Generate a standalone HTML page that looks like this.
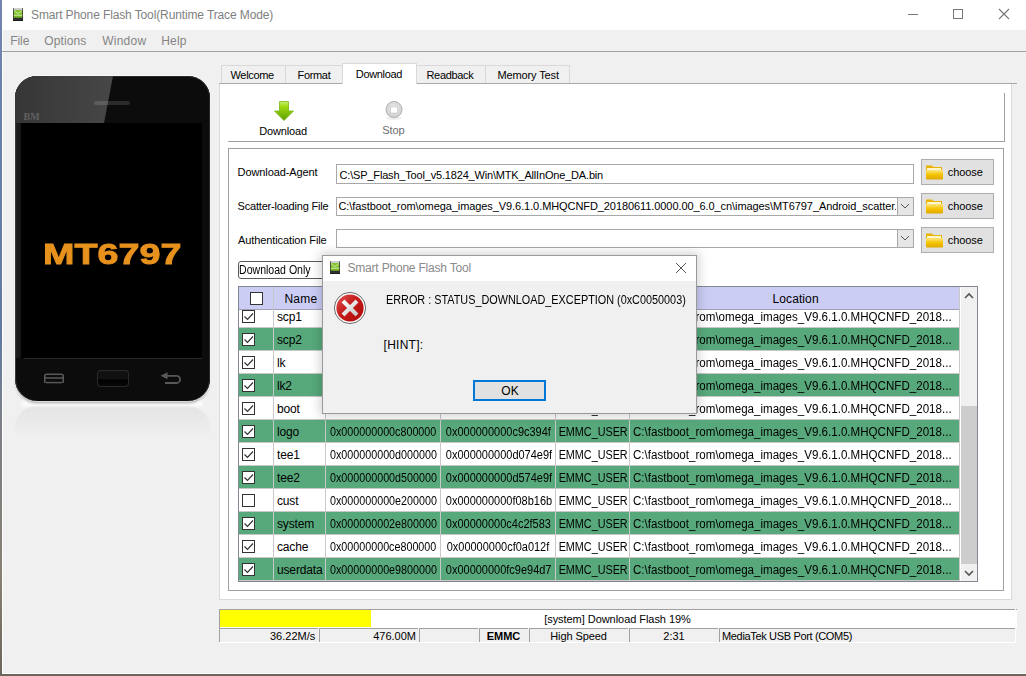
<!DOCTYPE html>
<html><head><meta charset="utf-8"><style>
html,body{margin:0;padding:0;width:1026px;height:676px;overflow:hidden;font-family:'Liberation Sans', sans-serif}
</style></head><body>
<div style="position:absolute;left:0px;top:0px;width:1026px;height:676px;background:linear-gradient(#7484b0,#6680aa 20%,#5f7aa0 50%,#7d8088 62%,#878173 85%,#6b655a)"></div>
<div style="position:absolute;left:2px;top:0px;width:1024px;height:674px;background:#f0f0f0"></div>
<div style="position:absolute;left:2px;top:0px;width:1px;height:674px;background:#fff"></div>
<div style="position:absolute;left:2px;top:673px;width:1024px;height:1px;background:#fff"></div>
<div style="position:absolute;left:3px;top:0px;width:1023px;height:30px;background:#fff"></div>
<svg style="position:absolute;left:13px;top:8px" width="10" height="13"><rect x="0" y="0" width="10" height="13" rx="1" fill="#303030"/><rect x="0.8" y="0" width="8.4" height="2" fill="#cfcfcf"/><rect x="0.8" y="2" width="8.4" height="7.5" fill="#86c232"/><path d="M0.8 2.6L5 5.6L9.2 2.6" stroke="#cdeaa0" stroke-width="0.9" fill="none"/><rect x="0.8" y="6.8" width="8.4" height="1" fill="#c8e89a"/><rect x="0.8" y="8.6" width="8.4" height="1" fill="#6aa522"/><rect x="0" y="12" width="10" height="1" fill="#1c1c1c"/></svg>
<div style="position:absolute;left:31px;top:9.00px;font:normal 12px/12px 'Liberation Sans', sans-serif;color:#7f7f7f;letter-spacing:-0.12px;white-space:pre;">Smart Phone Flash Tool(Runtime Trace Mode)</div>
<div style="position:absolute;left:908px;top:14px;width:10px;height:1px;background:#777"></div>
<div style="position:absolute;left:953px;top:9px;width:8px;height:8px;border:1px solid #777"></div>
<svg style="position:absolute;left:998px;top:8px" width="12" height="12"><path d="M1 1L11 11M11 1L1 11" stroke="#777" stroke-width="1.1"/></svg>
<div style="position:absolute;left:2px;top:51px;width:1024px;height:1px;background:#a0a0a0"></div>
<div style="position:absolute;left:10.3px;top:35.00px;font:normal 12px/12px 'Liberation Sans', sans-serif;color:#858585;letter-spacing:-0.1px;white-space:pre;">File</div>
<div style="position:absolute;left:44.3px;top:35.00px;font:normal 12px/12px 'Liberation Sans', sans-serif;color:#858585;letter-spacing:0.12px;white-space:pre;">Options</div>
<div style="position:absolute;left:102.2px;top:35.00px;font:normal 12px/12px 'Liberation Sans', sans-serif;color:#858585;letter-spacing:0.25px;white-space:pre;">Window</div>
<div style="position:absolute;left:161.2px;top:35.00px;font:normal 12px/12px 'Liberation Sans', sans-serif;color:#858585;letter-spacing:0.2px;white-space:pre;">Help</div>
<div style="position:absolute;left:15px;top:406px;width:195px;height:27px;border-radius:22px 22px 0 0;background:linear-gradient(#e4e4e4,#e9e9e9 50%,#eeeeee)"></div>
<div style="position:absolute;left:22px;top:400px;width:181px;height:6px;background:#fcfcfc;filter:blur(1.5px)"></div>
<div style="position:absolute;left:15px;top:76px;width:195px;height:325px;border-radius:22px;background:#0c0c0c;box-shadow:inset 1px 0 0 #3a3a3a, inset -1px 0 0 #262626, inset 0 1px 0 #2a2a2a, 0 0 0 1px rgba(255,255,255,.5), 0 3px 3px -1px rgba(0,0,0,.35);overflow:hidden">
<div style="position:absolute;left:0;top:0;width:195px;height:47px;background:linear-gradient(90deg,#363636,#4a4a4a 60%,#555);clip-path:polygon(0 0,98px 0,89px 47px,0 47px)"></div>
<div style="position:absolute;left:79px;top:25px;width:36px;height:4px;border-radius:2px;background:rgba(255,255,255,.13)"></div>
<div style="position:absolute;left:1px;top:47px;width:5px;height:235px;background:linear-gradient(90deg,#202020,#141414)"></div><div style="position:absolute;left:6px;top:47px;width:181px;height:235px;background:#000"></div>
<div style="position:absolute;left:9px;top:282px;width:178px;height:1px;background:#262626"></div>
<div style="position:absolute;left:82px;top:294px;width:32px;height:17px;border-radius:4px;background:linear-gradient(#121212,#101010 50%,#000 60%,#0a0a0a);box-shadow:inset 0 0 0 1px #2a2a2a"></div>
</div>
<div style="position:absolute;left:23.5px;top:112.00px;font:bold 10px/10px 'Liberation Serif', serif;color:#606060;letter-spacing:0px;white-space:pre;">BM</div>
<div style="position:absolute;left:42.5px;top:239.00px;font:bold 30px/30px 'Liberation Sans', sans-serif;color:#e8921e;letter-spacing:0px;white-space:pre;transform:scaleX(1.258);transform-origin:0 0;-webkit-text-stroke:0.9px #e8921e">MT6797</div>
<svg style="position:absolute;left:40px;top:370px" width="160" height="18"><path d="M4.8 13V6.2a2 2 0 0 1 2-2h14.4a2 2 0 0 1 2 2V13" fill="none" stroke="#585858" stroke-width="1.6"/><line x1="5" y1="8" x2="23" y2="8" stroke="#585858" stroke-width="1.5"/><line x1="6" y1="12.6" x2="22" y2="12.6" stroke="#585858" stroke-width="1.5"/><path d="M120.5 5.8 L127.5 2.3 L127.5 9.3 Z" fill="#585858"/><path d="M126 5.8 H136.5 a3.6 3.6 0 0 1 0 7.2 H125" fill="none" stroke="#585858" stroke-width="1.8"/></svg>
<div style="position:absolute;left:219px;top:83px;width:793px;height:517px;background:#fff;border:1px solid #d9d9d9;border-top-color:#a8a8a8;box-sizing:border-box"></div>
<div style="position:absolute;left:221px;top:65px;width:65px;height:19px;background:#f0f0f0;border:1px solid #d9d9d9;border-bottom:none;box-sizing:border-box"></div>
<div style="position:absolute;left:285px;top:65px;width:58px;height:19px;background:#f0f0f0;border:1px solid #d9d9d9;border-bottom:none;box-sizing:border-box"></div>
<div style="position:absolute;left:416px;top:65px;width:70px;height:19px;background:#f0f0f0;border:1px solid #d9d9d9;border-bottom:none;box-sizing:border-box"></div>
<div style="position:absolute;left:485px;top:65px;width:85px;height:19px;background:#f0f0f0;border:1px solid #d9d9d9;border-bottom:none;box-sizing:border-box"></div>
<div style="position:absolute;left:219px;top:83px;width:798px;height:1px;background:#a8a8a8"></div>
<div style="position:absolute;left:342px;top:63px;width:75px;height:21px;background:#fff;border:1px solid #d9d9d9;border-bottom:none;box-sizing:border-box"></div>
<div style="position:absolute;left:230.5px;top:70.00px;font:normal 11px/11px 'Liberation Sans', sans-serif;color:#000;letter-spacing:-0.33px;white-space:pre;">Welcome</div>
<div style="position:absolute;left:297.5px;top:70.00px;font:normal 11px/11px 'Liberation Sans', sans-serif;color:#000;letter-spacing:-0.33px;white-space:pre;">Format</div>
<div style="position:absolute;left:355.8px;top:69.00px;font:normal 11px/11px 'Liberation Sans', sans-serif;color:#000;letter-spacing:-0.33px;white-space:pre;">Download</div>
<div style="position:absolute;left:426.5px;top:70.00px;font:normal 11px/11px 'Liberation Sans', sans-serif;color:#000;letter-spacing:-0.33px;white-space:pre;">Readback</div>
<div style="position:absolute;left:497.5px;top:70.00px;font:normal 11px/11px 'Liberation Sans', sans-serif;color:#000;letter-spacing:-0.13px;white-space:pre;">Memory Test</div>
<div style="position:absolute;left:228px;top:141px;width:777px;height:1px;background:#a0a0a0"></div>
<div style="position:absolute;left:1004px;top:93px;width:1px;height:49px;background:#a0a0a0"></div>
<svg style="position:absolute;left:273px;top:100px" width="22" height="22"><defs><linearGradient id="ga" x1="0" y1="0" x2="0" y2="1"><stop offset="0" stop-color="#c8f07a"/><stop offset=".25" stop-color="#a3dc14"/><stop offset=".6" stop-color="#80bf0a"/><stop offset="1" stop-color="#5f9e05"/></linearGradient></defs><path d="M6.5 1.5H15.5V11H20.5L11 20.5L1.5 11H6.5Z" fill="url(#ga)" stroke="#7cb70a" stroke-width=".8"/></svg>
<div style="position:absolute;left:259.2px;top:126.00px;font:normal 11px/11px 'Liberation Sans', sans-serif;color:#000;letter-spacing:-0.15px;white-space:pre;">Download</div>
<svg style="position:absolute;left:384px;top:99px" width="22" height="22"><defs><radialGradient id="gs" cx=".5" cy=".4" r=".6"><stop offset="0" stop-color="#e8e8e8"/><stop offset="1" stop-color="#cfcfcf"/></radialGradient></defs><ellipse cx="10" cy="19.3" rx="8" ry="1.6" fill="rgba(0,0,0,.07)"/><circle cx="10" cy="10.5" r="8" fill="url(#gs)" stroke="#b0b0b0" stroke-width="1"/><rect x="6.5" y="8" width="7" height="6" fill="#fff" stroke="#bbb" stroke-width=".5"/></svg>
<div style="position:absolute;left:382.3px;top:125.00px;font:normal 11px/11px 'Liberation Sans', sans-serif;color:#6d6d6d;letter-spacing:-0.1px;white-space:pre;">Stop</div>
<div style="position:absolute;left:228px;top:148px;width:776px;height:443px;border:1px solid #a0a0a0;box-sizing:border-box"></div>
<div style="position:absolute;left:237.6px;top:167.00px;font:normal 11px/11px 'Liberation Sans', sans-serif;color:#000;letter-spacing:-0.1px;white-space:pre;">Download-Agent</div>
<div style="position:absolute;left:237.6px;top:201.00px;font:normal 11px/11px 'Liberation Sans', sans-serif;color:#000;letter-spacing:-0.2px;white-space:pre;">Scatter-loading File</div>
<div style="position:absolute;left:238px;top:235.00px;font:normal 11px/11px 'Liberation Sans', sans-serif;color:#000;letter-spacing:-0.1px;white-space:pre;">Authentication File</div>
<div style="position:absolute;left:336px;top:164px;width:578px;height:20px;background:#fff;border:1px solid #a8a8a8;box-sizing:border-box"></div>
<div style="position:absolute;left:339.6px;top:170.00px;font:normal 11px/11px 'Liberation Sans', sans-serif;color:#000;letter-spacing:-0.18px;white-space:pre;">C:\SP_Flash_Tool_v5.1824_Win\MTK_AllInOne_DA.bin</div>
<div style="position:absolute;left:336px;top:197px;width:578px;height:19px;background:#fff;border:1px solid #a8a8a8;box-sizing:border-box;overflow:hidden"></div>
<div style="position:absolute;left:337px;top:198px;width:559px;height:17px;overflow:hidden">
<div style="position:absolute;left:1.5px;top:3.00px;font:normal 11px/11px 'Liberation Sans', sans-serif;color:#000;letter-spacing:-0.08px;white-space:pre;">C:\fastboot_rom\omega_images_V9.6.1.0.MHQCNFD_20180611.0000.00_6.0_cn\images\MT6797_Android_scatter.</div>
</div>
<div style="position:absolute;left:336px;top:229px;width:578px;height:19px;background:#fff;border:1px solid #a8a8a8;box-sizing:border-box"></div>
<div style="position:absolute;left:897px;top:197px;width:17px;height:19px;background:#e6e6e6;border:1px solid #a8a8a8;box-sizing:border-box"></div>
<svg style="position:absolute;left:899px;top:202px" width="12" height="8"><path d="M2 2L6 6L10 2" fill="none" stroke="#555" stroke-width="1"/></svg>
<div style="position:absolute;left:897px;top:229px;width:17px;height:19px;background:#e6e6e6;border:1px solid #a8a8a8;box-sizing:border-box"></div>
<svg style="position:absolute;left:899px;top:234px" width="12" height="8"><path d="M2 2L6 6L10 2" fill="none" stroke="#555" stroke-width="1"/></svg>
<div style="position:absolute;left:921px;top:159px;width:73px;height:26px;background:#e1e1e1;border:1px solid #adadad;box-sizing:border-box"></div>
<svg style="position:absolute;left:925px;top:164px" width="19" height="16"><defs><linearGradient id="gf159" x1="0" y1="0" x2="0" y2="1"><stop offset="0" stop-color="#ffe680"/><stop offset=".5" stop-color="#f5c400"/><stop offset="1" stop-color="#e0a800"/></linearGradient></defs><path d="M1 1.5h6l1.5 1.5H17v12H1z" fill="#e8b400"/><rect x="2" y="4" width="14" height="3" fill="#fff6d0"/><rect x="1" y="6" width="17" height="9.5" rx="1" fill="url(#gf159)"/></svg>
<div style="position:absolute;left:947.8px;top:167.00px;font:normal 11px/11px 'Liberation Sans', sans-serif;color:#000;letter-spacing:-0.1px;white-space:pre;">choose</div>
<div style="position:absolute;left:921px;top:193px;width:73px;height:26px;background:#e1e1e1;border:1px solid #adadad;box-sizing:border-box"></div>
<svg style="position:absolute;left:925px;top:198px" width="19" height="16"><defs><linearGradient id="gf193" x1="0" y1="0" x2="0" y2="1"><stop offset="0" stop-color="#ffe680"/><stop offset=".5" stop-color="#f5c400"/><stop offset="1" stop-color="#e0a800"/></linearGradient></defs><path d="M1 1.5h6l1.5 1.5H17v12H1z" fill="#e8b400"/><rect x="2" y="4" width="14" height="3" fill="#fff6d0"/><rect x="1" y="6" width="17" height="9.5" rx="1" fill="url(#gf193)"/></svg>
<div style="position:absolute;left:947.8px;top:201.00px;font:normal 11px/11px 'Liberation Sans', sans-serif;color:#000;letter-spacing:-0.1px;white-space:pre;">choose</div>
<div style="position:absolute;left:921px;top:227px;width:73px;height:26px;background:#e1e1e1;border:1px solid #adadad;box-sizing:border-box"></div>
<svg style="position:absolute;left:925px;top:232px" width="19" height="16"><defs><linearGradient id="gf227" x1="0" y1="0" x2="0" y2="1"><stop offset="0" stop-color="#ffe680"/><stop offset=".5" stop-color="#f5c400"/><stop offset="1" stop-color="#e0a800"/></linearGradient></defs><path d="M1 1.5h6l1.5 1.5H17v12H1z" fill="#e8b400"/><rect x="2" y="4" width="14" height="3" fill="#fff6d0"/><rect x="1" y="6" width="17" height="9.5" rx="1" fill="url(#gf227)"/></svg>
<div style="position:absolute;left:947.8px;top:235.00px;font:normal 11px/11px 'Liberation Sans', sans-serif;color:#000;letter-spacing:-0.1px;white-space:pre;">choose</div>
<div style="position:absolute;left:238px;top:261px;width:100px;height:18px;background:#fff;border:1px solid #5a5a5a;border-radius:3px;box-sizing:border-box"></div>
<div style="position:absolute;left:239px;top:264.00px;font:normal 12px/12px 'Liberation Sans', sans-serif;color:#000;letter-spacing:0px;white-space:pre;transform:scaleX(0.88);transform-origin:0 0">Download Only</div>
<div style="position:absolute;left:238px;top:286px;width:740px;height:296px;background:#fff;border:1px solid #828790;box-sizing:border-box"></div>
<div style="position:absolute;left:239px;top:287px;width:721px;height:22px;background:#cccdf5"></div>
<div style="position:absolute;left:239px;top:309px;width:721px;height:1px;background:#a0a0b8"></div>
<div style="position:absolute;left:273px;top:287px;width:1px;height:294px;background:#c8c8c8"></div>
<div style="position:absolute;left:325px;top:287px;width:1px;height:294px;background:#c8c8c8"></div>
<div style="position:absolute;left:440px;top:287px;width:1px;height:294px;background:#c8c8c8"></div>
<div style="position:absolute;left:555px;top:287px;width:1px;height:294px;background:#c8c8c8"></div>
<div style="position:absolute;left:629px;top:287px;width:1px;height:294px;background:#c8c8c8"></div>
<div style="position:absolute;left:959px;top:287px;width:1px;height:294px;background:#c8c8c8"></div>
<div style="position:absolute;left:250px;top:292px;width:13px;height:13px;background:#fff;border:1px solid #333;box-sizing:border-box"></div>
<div style="position:absolute;left:284.5px;top:293.00px;font:normal 12px/12px 'Liberation Sans', sans-serif;color:#000;letter-spacing:0.2px;white-space:pre;">Name</div>
<div style="position:absolute;left:772.5px;top:293.00px;font:normal 12px/12px 'Liberation Sans', sans-serif;color:#000;letter-spacing:0.1px;white-space:pre;">Location</div>
<div style="position:absolute;left:239px;top:310px;width:720px;height:271px;overflow:hidden">
<div style="position:absolute;left:0px;top:0px;width:34px;height:17px;background:#fff"></div>
<div style="position:absolute;left:35px;top:0px;width:51px;height:17px;background:#fff"></div>
<div style="position:absolute;left:87px;top:0px;width:114px;height:17px;background:#fff"></div>
<div style="position:absolute;left:202px;top:0px;width:114px;height:17px;background:#fff"></div>
<div style="position:absolute;left:317px;top:0px;width:73px;height:17px;background:#fff"></div>
<div style="position:absolute;left:391px;top:0px;width:329px;height:17px;background:#fff"></div>
<div style="position:absolute;left:0;top:17px;width:720px;height:1px;background:#c8c8c8"></div>
<div style="position:absolute;left:3px;top:0px;width:13px;height:13px;background:#fff;border:1px solid #333;box-sizing:border-box"></div>
<svg style="position:absolute;left:3px;top:0px" width="13" height="13"><path d="M2.5 6.5L5.5 9.5L11 3.5" fill="none" stroke="#333" stroke-width="1.2"/></svg>
<div style="position:absolute;left:38px;top:1px;font:12px/12px 'Liberation Sans', sans-serif;white-space:pre;letter-spacing:-0.15px">scp1</div>
<div style="position:absolute;left:85px;width:114px;text-align:center;top:1px;font:12px/12px 'Liberation Sans', sans-serif;white-space:pre;transform:scaleX(0.895)">0x0000000000000000</div>
<div style="position:absolute;left:202px;width:114px;text-align:center;top:1px;font:12px/12px 'Liberation Sans', sans-serif;white-space:pre;transform:scaleX(0.915)">0x0000000000000000</div>
<div style="position:absolute;left:315.5px;width:73px;text-align:center;top:1px;font:12px/12px 'Liberation Sans', sans-serif;white-space:pre;transform:scaleX(0.9)">EMMC_USER</div>
<div style="position:absolute;left:394px;top:1px;font:12px/12px 'Liberation Sans', sans-serif;white-space:pre;transform:scaleX(0.965);transform-origin:0 0">C:\fastboot_rom\omega_images_V9.6.1.0.MHQCNFD_2018...</div>
<div style="position:absolute;left:0px;top:18px;width:34px;height:22px;background:#57a97c"></div>
<div style="position:absolute;left:35px;top:18px;width:51px;height:22px;background:#57a97c"></div>
<div style="position:absolute;left:87px;top:18px;width:114px;height:22px;background:#57a97c"></div>
<div style="position:absolute;left:202px;top:18px;width:114px;height:22px;background:#57a97c"></div>
<div style="position:absolute;left:317px;top:18px;width:73px;height:22px;background:#57a97c"></div>
<div style="position:absolute;left:391px;top:18px;width:329px;height:22px;background:#57a97c"></div>
<div style="position:absolute;left:0;top:40px;width:720px;height:1px;background:#c8c8c8"></div>
<div style="position:absolute;left:3px;top:23px;width:13px;height:13px;background:#fff;border:1px solid #333;box-sizing:border-box"></div>
<svg style="position:absolute;left:3px;top:23px" width="13" height="13"><path d="M2.5 6.5L5.5 9.5L11 3.5" fill="none" stroke="#333" stroke-width="1.2"/></svg>
<div style="position:absolute;left:38px;top:24px;font:12px/12px 'Liberation Sans', sans-serif;white-space:pre;letter-spacing:-0.15px">scp2</div>
<div style="position:absolute;left:85px;width:114px;text-align:center;top:24px;font:12px/12px 'Liberation Sans', sans-serif;white-space:pre;transform:scaleX(0.895)"></div>
<div style="position:absolute;left:202px;width:114px;text-align:center;top:24px;font:12px/12px 'Liberation Sans', sans-serif;white-space:pre;transform:scaleX(0.915)"></div>
<div style="position:absolute;left:315.5px;width:73px;text-align:center;top:24px;font:12px/12px 'Liberation Sans', sans-serif;white-space:pre;transform:scaleX(0.9)">EMMC_USER</div>
<div style="position:absolute;left:394px;top:24px;font:12px/12px 'Liberation Sans', sans-serif;white-space:pre;transform:scaleX(0.965);transform-origin:0 0">C:\fastboot_rom\omega_images_V9.6.1.0.MHQCNFD_2018...</div>
<div style="position:absolute;left:0px;top:41px;width:34px;height:22px;background:#fff"></div>
<div style="position:absolute;left:35px;top:41px;width:51px;height:22px;background:#fff"></div>
<div style="position:absolute;left:87px;top:41px;width:114px;height:22px;background:#fff"></div>
<div style="position:absolute;left:202px;top:41px;width:114px;height:22px;background:#fff"></div>
<div style="position:absolute;left:317px;top:41px;width:73px;height:22px;background:#fff"></div>
<div style="position:absolute;left:391px;top:41px;width:329px;height:22px;background:#fff"></div>
<div style="position:absolute;left:0;top:63px;width:720px;height:1px;background:#c8c8c8"></div>
<div style="position:absolute;left:3px;top:46px;width:13px;height:13px;background:#fff;border:1px solid #333;box-sizing:border-box"></div>
<svg style="position:absolute;left:3px;top:46px" width="13" height="13"><path d="M2.5 6.5L5.5 9.5L11 3.5" fill="none" stroke="#333" stroke-width="1.2"/></svg>
<div style="position:absolute;left:38px;top:47px;font:12px/12px 'Liberation Sans', sans-serif;white-space:pre;letter-spacing:-0.15px">lk</div>
<div style="position:absolute;left:85px;width:114px;text-align:center;top:47px;font:12px/12px 'Liberation Sans', sans-serif;white-space:pre;transform:scaleX(0.895)"></div>
<div style="position:absolute;left:202px;width:114px;text-align:center;top:47px;font:12px/12px 'Liberation Sans', sans-serif;white-space:pre;transform:scaleX(0.915)"></div>
<div style="position:absolute;left:315.5px;width:73px;text-align:center;top:47px;font:12px/12px 'Liberation Sans', sans-serif;white-space:pre;transform:scaleX(0.9)">EMMC_USER</div>
<div style="position:absolute;left:394px;top:47px;font:12px/12px 'Liberation Sans', sans-serif;white-space:pre;transform:scaleX(0.965);transform-origin:0 0">C:\fastboot_rom\omega_images_V9.6.1.0.MHQCNFD_2018...</div>
<div style="position:absolute;left:0px;top:64px;width:34px;height:22px;background:#57a97c"></div>
<div style="position:absolute;left:35px;top:64px;width:51px;height:22px;background:#57a97c"></div>
<div style="position:absolute;left:87px;top:64px;width:114px;height:22px;background:#57a97c"></div>
<div style="position:absolute;left:202px;top:64px;width:114px;height:22px;background:#57a97c"></div>
<div style="position:absolute;left:317px;top:64px;width:73px;height:22px;background:#57a97c"></div>
<div style="position:absolute;left:391px;top:64px;width:329px;height:22px;background:#57a97c"></div>
<div style="position:absolute;left:0;top:86px;width:720px;height:1px;background:#c8c8c8"></div>
<div style="position:absolute;left:3px;top:69px;width:13px;height:13px;background:#fff;border:1px solid #333;box-sizing:border-box"></div>
<svg style="position:absolute;left:3px;top:69px" width="13" height="13"><path d="M2.5 6.5L5.5 9.5L11 3.5" fill="none" stroke="#333" stroke-width="1.2"/></svg>
<div style="position:absolute;left:38px;top:70px;font:12px/12px 'Liberation Sans', sans-serif;white-space:pre;letter-spacing:-0.15px">lk2</div>
<div style="position:absolute;left:85px;width:114px;text-align:center;top:70px;font:12px/12px 'Liberation Sans', sans-serif;white-space:pre;transform:scaleX(0.895)"></div>
<div style="position:absolute;left:202px;width:114px;text-align:center;top:70px;font:12px/12px 'Liberation Sans', sans-serif;white-space:pre;transform:scaleX(0.915)"></div>
<div style="position:absolute;left:315.5px;width:73px;text-align:center;top:70px;font:12px/12px 'Liberation Sans', sans-serif;white-space:pre;transform:scaleX(0.9)">EMMC_USER</div>
<div style="position:absolute;left:394px;top:70px;font:12px/12px 'Liberation Sans', sans-serif;white-space:pre;transform:scaleX(0.965);transform-origin:0 0">C:\fastboot_rom\omega_images_V9.6.1.0.MHQCNFD_2018...</div>
<div style="position:absolute;left:0px;top:87px;width:34px;height:22px;background:#fff"></div>
<div style="position:absolute;left:35px;top:87px;width:51px;height:22px;background:#fff"></div>
<div style="position:absolute;left:87px;top:87px;width:114px;height:22px;background:#fff"></div>
<div style="position:absolute;left:202px;top:87px;width:114px;height:22px;background:#fff"></div>
<div style="position:absolute;left:317px;top:87px;width:73px;height:22px;background:#fff"></div>
<div style="position:absolute;left:391px;top:87px;width:329px;height:22px;background:#fff"></div>
<div style="position:absolute;left:0;top:109px;width:720px;height:1px;background:#c8c8c8"></div>
<div style="position:absolute;left:3px;top:92px;width:13px;height:13px;background:#fff;border:1px solid #333;box-sizing:border-box"></div>
<svg style="position:absolute;left:3px;top:92px" width="13" height="13"><path d="M2.5 6.5L5.5 9.5L11 3.5" fill="none" stroke="#333" stroke-width="1.2"/></svg>
<div style="position:absolute;left:38px;top:93px;font:12px/12px 'Liberation Sans', sans-serif;white-space:pre;letter-spacing:-0.15px">boot</div>
<div style="position:absolute;left:85px;width:114px;text-align:center;top:93px;font:12px/12px 'Liberation Sans', sans-serif;white-space:pre;transform:scaleX(0.895)"></div>
<div style="position:absolute;left:202px;width:114px;text-align:center;top:93px;font:12px/12px 'Liberation Sans', sans-serif;white-space:pre;transform:scaleX(0.915)"></div>
<div style="position:absolute;left:315.5px;width:73px;text-align:center;top:93px;font:12px/12px 'Liberation Sans', sans-serif;white-space:pre;transform:scaleX(0.9)">EMMC_USER</div>
<div style="position:absolute;left:394px;top:93px;font:12px/12px 'Liberation Sans', sans-serif;white-space:pre;transform:scaleX(0.965);transform-origin:0 0">C:\fastboot_rom\omega_images_V9.6.1.0.MHQCNFD_2018...</div>
<div style="position:absolute;left:0px;top:110px;width:34px;height:22px;background:#57a97c"></div>
<div style="position:absolute;left:35px;top:110px;width:51px;height:22px;background:#57a97c"></div>
<div style="position:absolute;left:87px;top:110px;width:114px;height:22px;background:#57a97c"></div>
<div style="position:absolute;left:202px;top:110px;width:114px;height:22px;background:#57a97c"></div>
<div style="position:absolute;left:317px;top:110px;width:73px;height:22px;background:#57a97c"></div>
<div style="position:absolute;left:391px;top:110px;width:329px;height:22px;background:#57a97c"></div>
<div style="position:absolute;left:0;top:132px;width:720px;height:1px;background:#c8c8c8"></div>
<div style="position:absolute;left:3px;top:115px;width:13px;height:13px;background:#fff;border:1px solid #333;box-sizing:border-box"></div>
<svg style="position:absolute;left:3px;top:115px" width="13" height="13"><path d="M2.5 6.5L5.5 9.5L11 3.5" fill="none" stroke="#333" stroke-width="1.2"/></svg>
<div style="position:absolute;left:38px;top:116px;font:12px/12px 'Liberation Sans', sans-serif;white-space:pre;letter-spacing:-0.15px">logo</div>
<div style="position:absolute;left:85px;width:114px;text-align:center;top:116px;font:12px/12px 'Liberation Sans', sans-serif;white-space:pre;transform:scaleX(0.895)">0x000000000c800000</div>
<div style="position:absolute;left:202px;width:114px;text-align:center;top:116px;font:12px/12px 'Liberation Sans', sans-serif;white-space:pre;transform:scaleX(0.915)">0x000000000c9c394f</div>
<div style="position:absolute;left:315.5px;width:73px;text-align:center;top:116px;font:12px/12px 'Liberation Sans', sans-serif;white-space:pre;transform:scaleX(0.9)">EMMC_USER</div>
<div style="position:absolute;left:394px;top:116px;font:12px/12px 'Liberation Sans', sans-serif;white-space:pre;transform:scaleX(0.965);transform-origin:0 0">C:\fastboot_rom\omega_images_V9.6.1.0.MHQCNFD_2018...</div>
<div style="position:absolute;left:0px;top:133px;width:34px;height:22px;background:#fff"></div>
<div style="position:absolute;left:35px;top:133px;width:51px;height:22px;background:#fff"></div>
<div style="position:absolute;left:87px;top:133px;width:114px;height:22px;background:#fff"></div>
<div style="position:absolute;left:202px;top:133px;width:114px;height:22px;background:#fff"></div>
<div style="position:absolute;left:317px;top:133px;width:73px;height:22px;background:#fff"></div>
<div style="position:absolute;left:391px;top:133px;width:329px;height:22px;background:#fff"></div>
<div style="position:absolute;left:0;top:155px;width:720px;height:1px;background:#c8c8c8"></div>
<div style="position:absolute;left:3px;top:138px;width:13px;height:13px;background:#fff;border:1px solid #333;box-sizing:border-box"></div>
<svg style="position:absolute;left:3px;top:138px" width="13" height="13"><path d="M2.5 6.5L5.5 9.5L11 3.5" fill="none" stroke="#333" stroke-width="1.2"/></svg>
<div style="position:absolute;left:38px;top:139px;font:12px/12px 'Liberation Sans', sans-serif;white-space:pre;letter-spacing:-0.15px">tee1</div>
<div style="position:absolute;left:85px;width:114px;text-align:center;top:139px;font:12px/12px 'Liberation Sans', sans-serif;white-space:pre;transform:scaleX(0.895)">0x000000000d000000</div>
<div style="position:absolute;left:202px;width:114px;text-align:center;top:139px;font:12px/12px 'Liberation Sans', sans-serif;white-space:pre;transform:scaleX(0.915)">0x000000000d074e9f</div>
<div style="position:absolute;left:315.5px;width:73px;text-align:center;top:139px;font:12px/12px 'Liberation Sans', sans-serif;white-space:pre;transform:scaleX(0.9)">EMMC_USER</div>
<div style="position:absolute;left:394px;top:139px;font:12px/12px 'Liberation Sans', sans-serif;white-space:pre;transform:scaleX(0.965);transform-origin:0 0">C:\fastboot_rom\omega_images_V9.6.1.0.MHQCNFD_2018...</div>
<div style="position:absolute;left:0px;top:156px;width:34px;height:22px;background:#57a97c"></div>
<div style="position:absolute;left:35px;top:156px;width:51px;height:22px;background:#57a97c"></div>
<div style="position:absolute;left:87px;top:156px;width:114px;height:22px;background:#57a97c"></div>
<div style="position:absolute;left:202px;top:156px;width:114px;height:22px;background:#57a97c"></div>
<div style="position:absolute;left:317px;top:156px;width:73px;height:22px;background:#57a97c"></div>
<div style="position:absolute;left:391px;top:156px;width:329px;height:22px;background:#57a97c"></div>
<div style="position:absolute;left:0;top:178px;width:720px;height:1px;background:#c8c8c8"></div>
<div style="position:absolute;left:3px;top:161px;width:13px;height:13px;background:#fff;border:1px solid #333;box-sizing:border-box"></div>
<svg style="position:absolute;left:3px;top:161px" width="13" height="13"><path d="M2.5 6.5L5.5 9.5L11 3.5" fill="none" stroke="#333" stroke-width="1.2"/></svg>
<div style="position:absolute;left:38px;top:162px;font:12px/12px 'Liberation Sans', sans-serif;white-space:pre;letter-spacing:-0.15px">tee2</div>
<div style="position:absolute;left:85px;width:114px;text-align:center;top:162px;font:12px/12px 'Liberation Sans', sans-serif;white-space:pre;transform:scaleX(0.895)">0x000000000d500000</div>
<div style="position:absolute;left:202px;width:114px;text-align:center;top:162px;font:12px/12px 'Liberation Sans', sans-serif;white-space:pre;transform:scaleX(0.915)">0x000000000d574e9f</div>
<div style="position:absolute;left:315.5px;width:73px;text-align:center;top:162px;font:12px/12px 'Liberation Sans', sans-serif;white-space:pre;transform:scaleX(0.9)">EMMC_USER</div>
<div style="position:absolute;left:394px;top:162px;font:12px/12px 'Liberation Sans', sans-serif;white-space:pre;transform:scaleX(0.965);transform-origin:0 0">C:\fastboot_rom\omega_images_V9.6.1.0.MHQCNFD_2018...</div>
<div style="position:absolute;left:0px;top:179px;width:34px;height:22px;background:#fff"></div>
<div style="position:absolute;left:35px;top:179px;width:51px;height:22px;background:#fff"></div>
<div style="position:absolute;left:87px;top:179px;width:114px;height:22px;background:#fff"></div>
<div style="position:absolute;left:202px;top:179px;width:114px;height:22px;background:#fff"></div>
<div style="position:absolute;left:317px;top:179px;width:73px;height:22px;background:#fff"></div>
<div style="position:absolute;left:391px;top:179px;width:329px;height:22px;background:#fff"></div>
<div style="position:absolute;left:0;top:201px;width:720px;height:1px;background:#c8c8c8"></div>
<div style="position:absolute;left:3px;top:184px;width:13px;height:13px;background:#fff;border:1px solid #333;box-sizing:border-box"></div>
<div style="position:absolute;left:38px;top:185px;font:12px/12px 'Liberation Sans', sans-serif;white-space:pre;letter-spacing:-0.15px">cust</div>
<div style="position:absolute;left:85px;width:114px;text-align:center;top:185px;font:12px/12px 'Liberation Sans', sans-serif;white-space:pre;transform:scaleX(0.895)">0x000000000e200000</div>
<div style="position:absolute;left:202px;width:114px;text-align:center;top:185px;font:12px/12px 'Liberation Sans', sans-serif;white-space:pre;transform:scaleX(0.915)">0x000000000f08b16b</div>
<div style="position:absolute;left:315.5px;width:73px;text-align:center;top:185px;font:12px/12px 'Liberation Sans', sans-serif;white-space:pre;transform:scaleX(0.9)">EMMC_USER</div>
<div style="position:absolute;left:394px;top:185px;font:12px/12px 'Liberation Sans', sans-serif;white-space:pre;transform:scaleX(0.965);transform-origin:0 0">C:\fastboot_rom\omega_images_V9.6.1.0.MHQCNFD_2018...</div>
<div style="position:absolute;left:0px;top:202px;width:34px;height:22px;background:#57a97c"></div>
<div style="position:absolute;left:35px;top:202px;width:51px;height:22px;background:#57a97c"></div>
<div style="position:absolute;left:87px;top:202px;width:114px;height:22px;background:#57a97c"></div>
<div style="position:absolute;left:202px;top:202px;width:114px;height:22px;background:#57a97c"></div>
<div style="position:absolute;left:317px;top:202px;width:73px;height:22px;background:#57a97c"></div>
<div style="position:absolute;left:391px;top:202px;width:329px;height:22px;background:#57a97c"></div>
<div style="position:absolute;left:0;top:224px;width:720px;height:1px;background:#c8c8c8"></div>
<div style="position:absolute;left:3px;top:207px;width:13px;height:13px;background:#fff;border:1px solid #333;box-sizing:border-box"></div>
<svg style="position:absolute;left:3px;top:207px" width="13" height="13"><path d="M2.5 6.5L5.5 9.5L11 3.5" fill="none" stroke="#333" stroke-width="1.2"/></svg>
<div style="position:absolute;left:38px;top:208px;font:12px/12px 'Liberation Sans', sans-serif;white-space:pre;letter-spacing:-0.15px">system</div>
<div style="position:absolute;left:85px;width:114px;text-align:center;top:208px;font:12px/12px 'Liberation Sans', sans-serif;white-space:pre;transform:scaleX(0.895)">0x000000002e800000</div>
<div style="position:absolute;left:202px;width:114px;text-align:center;top:208px;font:12px/12px 'Liberation Sans', sans-serif;white-space:pre;transform:scaleX(0.915)">0x00000000c4c2f583</div>
<div style="position:absolute;left:315.5px;width:73px;text-align:center;top:208px;font:12px/12px 'Liberation Sans', sans-serif;white-space:pre;transform:scaleX(0.9)">EMMC_USER</div>
<div style="position:absolute;left:394px;top:208px;font:12px/12px 'Liberation Sans', sans-serif;white-space:pre;transform:scaleX(0.965);transform-origin:0 0">C:\fastboot_rom\omega_images_V9.6.1.0.MHQCNFD_2018...</div>
<div style="position:absolute;left:0px;top:225px;width:34px;height:22px;background:#fff"></div>
<div style="position:absolute;left:35px;top:225px;width:51px;height:22px;background:#fff"></div>
<div style="position:absolute;left:87px;top:225px;width:114px;height:22px;background:#fff"></div>
<div style="position:absolute;left:202px;top:225px;width:114px;height:22px;background:#fff"></div>
<div style="position:absolute;left:317px;top:225px;width:73px;height:22px;background:#fff"></div>
<div style="position:absolute;left:391px;top:225px;width:329px;height:22px;background:#fff"></div>
<div style="position:absolute;left:0;top:247px;width:720px;height:1px;background:#c8c8c8"></div>
<div style="position:absolute;left:3px;top:230px;width:13px;height:13px;background:#fff;border:1px solid #333;box-sizing:border-box"></div>
<svg style="position:absolute;left:3px;top:230px" width="13" height="13"><path d="M2.5 6.5L5.5 9.5L11 3.5" fill="none" stroke="#333" stroke-width="1.2"/></svg>
<div style="position:absolute;left:38px;top:231px;font:12px/12px 'Liberation Sans', sans-serif;white-space:pre;letter-spacing:-0.15px">cache</div>
<div style="position:absolute;left:85px;width:114px;text-align:center;top:231px;font:12px/12px 'Liberation Sans', sans-serif;white-space:pre;transform:scaleX(0.895)">0x00000000ce800000</div>
<div style="position:absolute;left:202px;width:114px;text-align:center;top:231px;font:12px/12px 'Liberation Sans', sans-serif;white-space:pre;transform:scaleX(0.915)">0x00000000cf0a012f</div>
<div style="position:absolute;left:315.5px;width:73px;text-align:center;top:231px;font:12px/12px 'Liberation Sans', sans-serif;white-space:pre;transform:scaleX(0.9)">EMMC_USER</div>
<div style="position:absolute;left:394px;top:231px;font:12px/12px 'Liberation Sans', sans-serif;white-space:pre;transform:scaleX(0.965);transform-origin:0 0">C:\fastboot_rom\omega_images_V9.6.1.0.MHQCNFD_2018...</div>
<div style="position:absolute;left:0px;top:248px;width:34px;height:22px;background:#57a97c"></div>
<div style="position:absolute;left:35px;top:248px;width:51px;height:22px;background:#57a97c"></div>
<div style="position:absolute;left:87px;top:248px;width:114px;height:22px;background:#57a97c"></div>
<div style="position:absolute;left:202px;top:248px;width:114px;height:22px;background:#57a97c"></div>
<div style="position:absolute;left:317px;top:248px;width:73px;height:22px;background:#57a97c"></div>
<div style="position:absolute;left:391px;top:248px;width:329px;height:22px;background:#57a97c"></div>
<div style="position:absolute;left:0;top:270px;width:720px;height:1px;background:#c8c8c8"></div>
<div style="position:absolute;left:3px;top:253px;width:13px;height:13px;background:#fff;border:1px solid #333;box-sizing:border-box"></div>
<svg style="position:absolute;left:3px;top:253px" width="13" height="13"><path d="M2.5 6.5L5.5 9.5L11 3.5" fill="none" stroke="#333" stroke-width="1.2"/></svg>
<div style="position:absolute;left:38px;top:254px;font:12px/12px 'Liberation Sans', sans-serif;white-space:pre;letter-spacing:-0.15px">userdata</div>
<div style="position:absolute;left:85px;width:114px;text-align:center;top:254px;font:12px/12px 'Liberation Sans', sans-serif;white-space:pre;transform:scaleX(0.895)">0x00000000e9800000</div>
<div style="position:absolute;left:202px;width:114px;text-align:center;top:254px;font:12px/12px 'Liberation Sans', sans-serif;white-space:pre;transform:scaleX(0.915)">0x00000000fc9e94d7</div>
<div style="position:absolute;left:315.5px;width:73px;text-align:center;top:254px;font:12px/12px 'Liberation Sans', sans-serif;white-space:pre;transform:scaleX(0.9)">EMMC_USER</div>
<div style="position:absolute;left:394px;top:254px;font:12px/12px 'Liberation Sans', sans-serif;white-space:pre;transform:scaleX(0.965);transform-origin:0 0">C:\fastboot_rom\omega_images_V9.6.1.0.MHQCNFD_2018...</div>
</div>
<div style="position:absolute;left:960px;top:287px;width:1px;height:294px;background:#fff"></div>
<div style="position:absolute;left:961px;top:287px;width:16px;height:294px;background:#f0f0f0"></div>
<div style="position:absolute;left:961px;top:406px;width:16px;height:158px;background:#cdcdcd"></div>
<svg style="position:absolute;left:963px;top:291px" width="12" height="10"><path d="M2 7L6 3L10 7" fill="none" stroke="#555" stroke-width="1.6"/></svg>
<svg style="position:absolute;left:963px;top:568px" width="12" height="10"><path d="M2 3L6 7L10 3" fill="none" stroke="#555" stroke-width="1.6"/></svg>
<div style="position:absolute;left:219px;top:609px;width:797px;height:19px;background:#fff;border-top:1px solid #a0a0a0;border-left:1px solid #a0a0a0"></div>
<div style="position:absolute;left:220px;top:610px;width:151px;height:17px;background:#ffff00"></div>
<div style="position:absolute;left:544.2px;top:614.00px;font:normal 11px/11px 'Liberation Sans', sans-serif;color:#000;letter-spacing:-0.05px;white-space:pre;">[system] Download Flash 19%</div>
<div style="position:absolute;left:219px;top:628px;width:99px;height:15px;border-top:1px solid #a0a0a0;border-left:1px solid #a0a0a0;box-sizing:border-box"></div>
<div style="position:absolute;left:319px;top:628px;width:99px;height:15px;border-top:1px solid #a0a0a0;border-left:1px solid #a0a0a0;box-sizing:border-box"></div>
<div style="position:absolute;left:419px;top:628px;width:59px;height:15px;border-top:1px solid #a0a0a0;border-left:1px solid #a0a0a0;box-sizing:border-box"></div>
<div style="position:absolute;left:479px;top:628px;width:49px;height:15px;border-top:1px solid #a0a0a0;border-left:1px solid #a0a0a0;box-sizing:border-box"></div>
<div style="position:absolute;left:529px;top:628px;width:99px;height:15px;border-top:1px solid #a0a0a0;border-left:1px solid #a0a0a0;box-sizing:border-box"></div>
<div style="position:absolute;left:629px;top:628px;width:89px;height:15px;border-top:1px solid #a0a0a0;border-left:1px solid #a0a0a0;box-sizing:border-box"></div>
<div style="position:absolute;left:719px;top:628px;width:296px;height:15px;border-top:1px solid #a0a0a0;border-left:1px solid #a0a0a0;box-sizing:border-box"></div>
<div style="position:absolute;left:219px;top:642px;width:797px;height:1px;background:#fff"></div>
<div style="position:absolute;left:1015px;top:609px;width:1px;height:34px;background:#fff"></div>
<div style="position:absolute;left:270px;top:631.00px;font:normal 11px/11px 'Liberation Sans', sans-serif;color:#000;letter-spacing:0px;white-space:pre;width:44px;text-align:right">36.22M/s</div>
<div style="position:absolute;left:372px;top:631.00px;font:normal 11px/11px 'Liberation Sans', sans-serif;color:#000;letter-spacing:0px;white-space:pre;width:44px;text-align:right">476.00M</div>
<div style="position:absolute;left:203.5px;width:600px;text-align:center;top:631.00px;font:bold 11px/11px 'Liberation Sans', sans-serif;color:#000;letter-spacing:0px;white-space:pre;">EMMC</div>
<div style="position:absolute;left:278.5px;width:600px;text-align:center;top:631.00px;font:normal 11px/11px 'Liberation Sans', sans-serif;color:#000;letter-spacing:-0.1px;white-space:pre;">High Speed</div>
<div style="position:absolute;left:374px;width:600px;text-align:center;top:631.00px;font:normal 11px/11px 'Liberation Sans', sans-serif;color:#000;letter-spacing:0px;white-space:pre;">2:31</div>
<div style="position:absolute;left:722px;top:631.00px;font:normal 11px/11px 'Liberation Sans', sans-serif;color:#000;letter-spacing:-0.34px;white-space:pre;">MediaTek USB Port (COM5)</div>
<div style="position:absolute;left:322px;top:255px;width:375px;height:159px;background:#f0f0f0;border:1px solid #9a9a9a;box-sizing:border-box;box-shadow:0 0 10px 2px rgba(0,0,0,.18)"></div>
<div style="position:absolute;left:323px;top:256px;width:373px;height:25px;background:#fff"></div>
<svg style="position:absolute;left:330px;top:261px" width="10" height="13"><rect x="0" y="0" width="10" height="13" rx="1" fill="#303030"/><rect x="0.8" y="0" width="8.4" height="2" fill="#cfcfcf"/><rect x="0.8" y="2" width="8.4" height="7.5" fill="#86c232"/><path d="M0.8 2.6L5 5.6L9.2 2.6" stroke="#cdeaa0" stroke-width="0.9" fill="none"/><rect x="0.8" y="6.8" width="8.4" height="1" fill="#c8e89a"/><rect x="0.8" y="8.6" width="8.4" height="1" fill="#6aa522"/><rect x="0" y="12" width="10" height="1" fill="#1c1c1c"/></svg>
<div style="position:absolute;left:347.5px;top:262.00px;font:normal 12px/12px 'Liberation Sans', sans-serif;color:#8a8a8a;letter-spacing:-0.2px;white-space:pre;">Smart Phone Flash Tool</div>
<svg style="position:absolute;left:675px;top:262px" width="12" height="12"><path d="M1 1L11 11M11 1L1 11" stroke="#555" stroke-width="1"/></svg>
<svg style="position:absolute;left:333px;top:291px" width="34" height="34"><defs><linearGradient id="ge" x1="0" y1="0" x2="1" y2="1"><stop offset="0" stop-color="#e05656"/><stop offset=".45" stop-color="#c41a1a"/><stop offset="1" stop-color="#b00808"/></linearGradient><linearGradient id="gx" x1="0" y1="0" x2="1" y2="1"><stop offset="0" stop-color="#ffffff"/><stop offset="1" stop-color="#c8c8c8"/></linearGradient></defs><circle cx="17" cy="17" r="15.6" fill="#fafafa" stroke="#6e6e6e" stroke-width="1"/><circle cx="17" cy="17" r="13.6" fill="url(#ge)"/><path d="M10 10L24 24M24 10L10 24" stroke="url(#gx)" stroke-width="4" stroke-linecap="butt"/></svg>
<div style="position:absolute;left:385.6px;top:294.00px;font:normal 12px/12px 'Liberation Sans', sans-serif;color:#000;letter-spacing:0px;white-space:pre;transform:scaleX(0.904);transform-origin:0 0">ERROR : STATUS_DOWNLOAD_EXCEPTION (0xC0050003)</div>
<div style="position:absolute;left:383.6px;top:339.00px;font:normal 12px/12px 'Liberation Sans', sans-serif;color:#000;letter-spacing:0.25px;white-space:pre;">[HINT]:</div>
<div style="position:absolute;left:473px;top:380px;width:73px;height:21px;background:#e1e1e1;border:2px solid #0078d7;box-sizing:border-box"></div>
<div style="position:absolute;left:210px;width:600px;text-align:center;top:385.00px;font:normal 12px/12px 'Liberation Sans', sans-serif;color:#000;letter-spacing:0px;white-space:pre;">OK</div>
</body></html>
